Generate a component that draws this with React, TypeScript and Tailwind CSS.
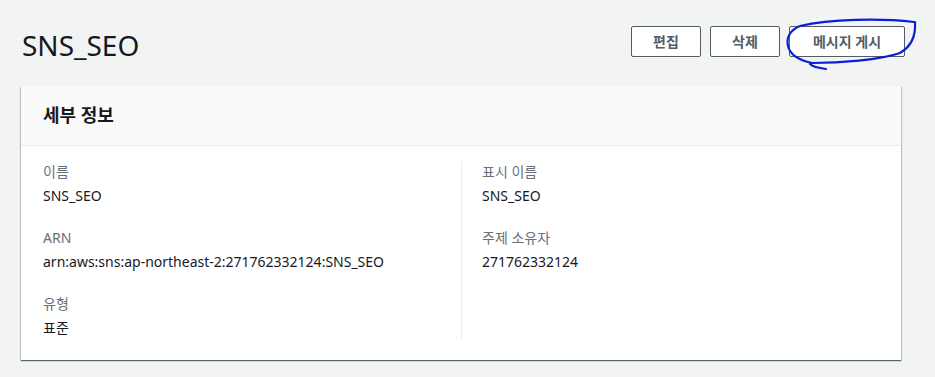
import React from 'react';

const font = { fontFamily: '"Noto Sans", "Noto Sans CJK KR", sans-serif' };

function Field({ label, value }: { label: string; value: string }) {
  return (
    <div className="flex flex-col">
      <div className="text-[14px] leading-[22px] text-[#687078]">{label}</div>
      <div className="mt-[2px] text-[14px] leading-[22px] text-[#16191f]">{value}</div>
    </div>
  );
}

export default function App() {
  return (
    <div className="relative min-h-[377px] w-[935px] bg-[#f2f3f3]" style={font}>
      {/* Page header */}
      <div className="flex items-start justify-between pl-[22px] pr-[30px] pt-[26px]">
        <h1 className="text-[28px] leading-[38px] font-normal text-[#16191f]">SNS_SEO</h1>
        <div className="flex gap-[9px]">
          <button className="h-[31px] w-[70px] rounded-[2px] border border-[#545b64] bg-white text-[14px] font-bold text-[#545b64]">
            편집
          </button>
          <button className="h-[31px] w-[70px] rounded-[2px] border border-[#545b64] bg-white text-[14px] font-bold text-[#545b64]">
            삭제
          </button>
          <button className="h-[31px] w-[116px] rounded-[2px] border border-[#545b64] bg-white text-[14px] font-bold text-[#545b64]">
            메시지 게시
          </button>
        </div>
      </div>

      {/* Details card */}
      <div className="ml-[21px] mt-[22px] w-[880px] bg-white shadow-[0_1px_1px_0_rgba(0,28,36,0.5),1px_1px_1px_0_rgba(0,28,36,0.15),-1px_1px_1px_0_rgba(0,28,36,0.15)]">
        <div className="flex h-[60px] items-center border-b border-[#eaeded] bg-[#fafafa] px-[22px]">
          <h2 className="text-[18px] font-bold text-[#16191f]">세부 정보</h2>
        </div>
        <div className="grid grid-cols-2 px-[22px] pb-[21px] pt-[15px]">
          <div className="flex flex-col gap-[20px] pr-5">
            <Field label="이름" value="SNS_SEO" />
            <Field label="ARN" value="arn:aws:sns:ap-northeast-2:271762332124:SNS_SEO" />
            <Field label="유형" value="표준" />
          </div>
          <div className="flex flex-col gap-[20px] border-l border-[#eaeded] pl-5">
            <Field label="표시 이름" value="SNS_SEO" />
            <Field label="주제 소유자" value="271762332124" />
          </div>
        </div>
      </div>

      {/* Hand-drawn annotation */}
      <svg
        className="pointer-events-none absolute left-0 top-0"
        width="935"
        height="377"
        viewBox="0 0 935 377"
      >
        <path
          d="M914 22 C 880 18, 830 19, 800 26 C 790 30, 786 38, 788 46 C 790 55, 798 60, 812 63 C 840 63, 880 60, 900 53 C 912 46, 916 36, 915 22 M 826 69 C 818 68, 812 66, 810 64"
          fill="none"
          stroke="#0a1ed8"
          strokeWidth="2.2"
          strokeLinecap="round"
          strokeLinejoin="round"
        />
      </svg>
    </div>
  );
}
